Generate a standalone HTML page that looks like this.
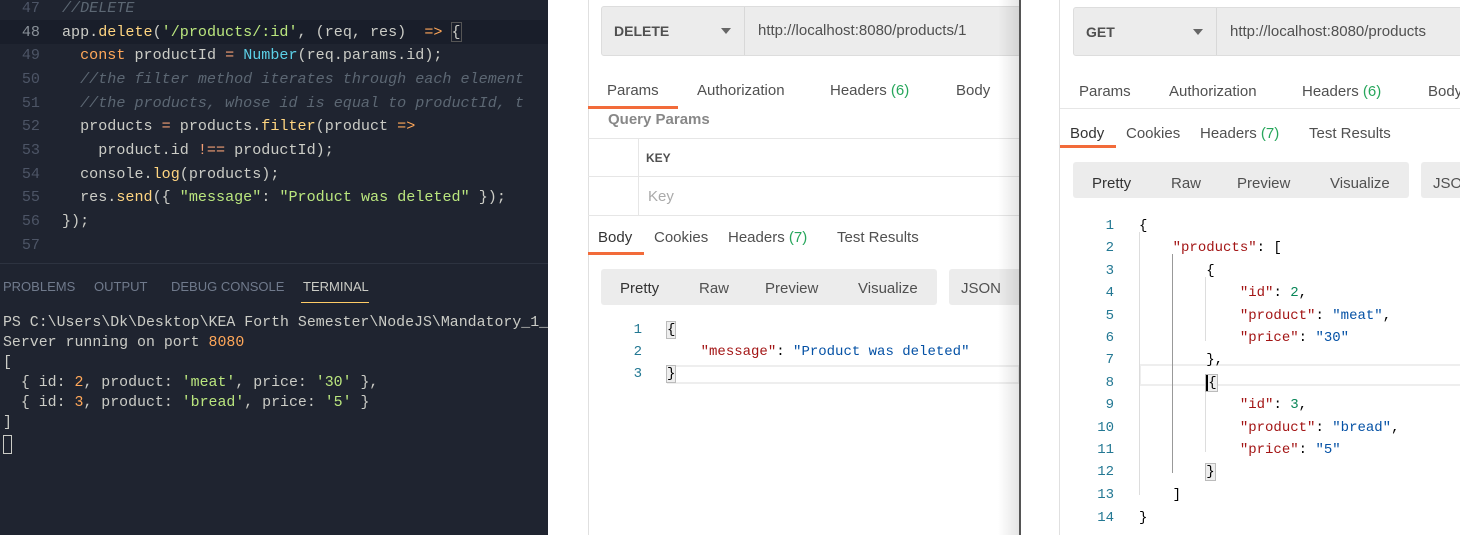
<!DOCTYPE html>
<html><head><meta charset="utf-8"><style>
*{margin:0;padding:0;box-sizing:border-box}
body{width:1460px;height:535px;position:relative;overflow:hidden;background:#fff;font-family:"Liberation Sans",sans-serif}
.a{position:absolute;white-space:pre}
#ed{position:absolute;left:0;top:0;width:548px;height:535px;background:#1f2430;overflow:hidden}
.ln{position:absolute;left:0;width:40px;text-align:right;color:#4d5566;font:15.1px/24px "Liberation Mono",monospace}
.cd{position:absolute;left:62px;color:#cbccc6;font:15.1px/24px "Liberation Mono",monospace;white-space:pre}
.k{color:#ffa759}.f{color:#ffd580}.s{color:#bae67e}.c{color:#5c6773;font-style:italic}.n{color:#5ccfe6}.o{color:#f29e74}
.tm{position:absolute;left:3px;color:#cbccc6;font:14.9px/20px "Liberation Mono",monospace;white-space:pre}
.tab{position:absolute;top:279px;font-size:13px;color:#707a8c}
.pm{color:#505050;font-size:15px;margin-top:2px}
.g{color:#26a65b}
.box{position:absolute;background:#ececec;border:1px solid #ddd;border-radius:3px}
.jc{position:absolute;font:14px/22px "Liberation Mono",monospace;white-space:pre;color:#000}
.jn{position:absolute;font:14px/22px "Liberation Mono",monospace;color:#237893;text-align:right;width:40px}
.r{color:#a31515}.b{color:#0451a5}.t{color:#098658}
</style></head><body>
<div id="ed">
<div style="position:absolute;left:0;top:20px;width:548px;height:24px;background:#191e2a"></div>
<div class="ln" style="top:-4px">47</div><div class="cd c" style="top:-4px">//DELETE</div>
<div class="ln" style="top:20px;color:#8a9199">48</div><div class="cd" style="top:20px">app.<span class="f">delete</span>(<span class="s">'/products/:id'</span>, (req, res)  <span class="k">=&gt;</span> <span style="outline:1px solid #555">{</span></div>
<div class="ln" style="top:43px">49</div><div class="cd" style="top:43px">  <span class="k">const</span> productId <span class="o">=</span> <span class="n">Number</span>(req.params.id);</div>
<div class="ln" style="top:67px">50</div><div class="cd c" style="top:67px">  //the filter method iterates through each element</div>
<div class="ln" style="top:91px">51</div><div class="cd c" style="top:91px">  //the products, whose id is equal to productId, t</div>
<div class="ln" style="top:114px">52</div><div class="cd" style="top:114px">  products <span class="o">=</span> products.<span class="f">filter</span>(product <span class="k">=&gt;</span></div>
<div class="ln" style="top:138px">53</div><div class="cd" style="top:138px">    product.id <span class="o">!==</span> productId);</div>
<div class="ln" style="top:162px">54</div><div class="cd" style="top:162px">  console.<span class="f">log</span>(products);</div>
<div class="ln" style="top:185px">55</div><div class="cd" style="top:185px">  res.<span class="f">send</span>({ <span class="s">"message"</span>: <span class="s">"Product was deleted"</span> });</div>
<div class="ln" style="top:209px">56</div><div class="cd" style="top:209px">});</div>
<div class="ln" style="top:233px">57</div>
<div style="position:absolute;left:0;top:263px;width:548px;height:1px;background:#2d3340"></div>
<div class="tab" style="left:3px">PROBLEMS</div>
<div class="tab" style="left:94px">OUTPUT</div>
<div class="tab" style="left:171px">DEBUG CONSOLE</div>
<div class="tab" style="left:303px;color:#cbccc6">TERMINAL</div>
<div style="position:absolute;left:301px;top:302px;width:68px;height:1px;background:#ffcc66"></div>
<div class="tm" style="top:313px">PS C:\Users\Dk\Desktop\KEA Forth Semester\NodeJS\Mandatory_1_</div>
<div class="tm" style="top:333px">Server running on port <span class="k">8080</span></div>
<div class="tm" style="top:353px">[</div>
<div class="tm" style="top:373px">  { id: <span class="k">2</span>, product: <span class="s">'meat'</span>, price: <span class="s">'30'</span> },</div>
<div class="tm" style="top:393px">  { id: <span class="k">3</span>, product: <span class="s">'bread'</span>, price: <span class="s">'5'</span> }</div>
<div class="tm" style="top:413px">]</div>
<div style="position:absolute;left:3px;top:435px;width:9px;height:19px;border:1px solid #cbccc6"></div>
</div>

<!-- middle panel -->
<div style="position:absolute;left:588px;top:0;width:1px;height:535px;background:#e0e0e0"></div>
<div class="box" style="left:601px;top:6px;width:420px;height:50px"></div>
<div style="position:absolute;left:744px;top:7px;width:1px;height:48px;background:#d8d8d8"></div>
<div class="a" style="left:614px;top:23px;font-size:14px;font-weight:bold;color:#505050">DELETE</div>
<div class="a" style="left:721px;top:28px;border:5px solid transparent;border-top:6px solid #666;border-bottom:0"></div>
<div class="a" style="left:758px;top:22px;font-size:15px;color:#505050">http://localhost:8080/products/1</div>
<div class="a pm" style="left:607px;top:80px">Params</div>
<div class="a pm" style="left:697px;top:80px">Authorization</div>
<div class="a pm" style="left:830px;top:80px">Headers <span class="g">(6)</span></div>
<div class="a pm" style="left:956px;top:80px">Body</div>
<div style="position:absolute;left:588px;top:106px;width:90px;height:3px;background:#f26b3a"></div>
<div class="a" style="left:608px;top:111px;font-size:15px;font-weight:bold;color:#888">Query Params</div>
<div style="position:absolute;left:588px;top:138px;width:432px;height:1px;background:#e6e6e6"></div>
<div style="position:absolute;left:588px;top:176px;width:432px;height:1px;background:#e6e6e6"></div>
<div style="position:absolute;left:588px;top:215px;width:432px;height:1px;background:#e6e6e6"></div>
<div style="position:absolute;left:638px;top:138px;width:1px;height:77px;background:#e6e6e6"></div>
<div class="a" style="left:646px;top:151px;font-size:12px;font-weight:bold;color:#505050">KEY</div>
<div class="a" style="left:648px;top:188px;font-size:15px;color:#aaa">Key</div>
<div class="a pm" style="left:598px;top:227px;color:#333">Body</div>
<div class="a pm" style="left:654px;top:227px">Cookies</div>
<div class="a pm" style="left:728px;top:227px">Headers <span class="g">(7)</span></div>
<div class="a pm" style="left:837px;top:227px">Test Results</div>
<div style="position:absolute;left:588px;top:252px;width:56px;height:3px;background:#f26b3a"></div>
<div class="box" style="left:601px;top:269px;width:336px;height:36px;border:0"></div>
<div class="box" style="left:949px;top:269px;width:80px;height:36px;border:0"></div>
<div class="a pm" style="left:620px;top:278px;color:#333">Pretty</div>
<div class="a pm" style="left:699px;top:278px">Raw</div>
<div class="a pm" style="left:765px;top:278px">Preview</div>
<div class="a pm" style="left:858px;top:278px">Visualize</div>
<div class="a pm" style="left:961px;top:278px">JSON</div>
<div style="position:absolute;left:667px;top:365px;width:353px;height:19px;border:2px solid #eee;border-left:0"></div>
<div class="jn" style="left:602px;top:319px">1</div><div class="jc" style="left:667px;top:319px"><span style="outline:1px solid #bbb;background:#eee">{</span></div>
<div class="jn" style="left:602px;top:341px">2</div><div class="jc" style="left:667px;top:341px">    <span class="r">"message"</span>: <span class="b">"Product was deleted"</span></div>
<div class="jn" style="left:602px;top:363px">3</div><div class="jc" style="left:667px;top:363px"><span style="outline:1px solid #bbb;background:#eee">}</span></div>
<div style="position:absolute;left:998px;top:0;width:21px;height:535px;background:linear-gradient(90deg,rgba(0,0,0,0),rgba(0,0,0,.1))"></div>
<div style="position:absolute;left:1019px;top:0;width:2px;height:535px;background:#555"></div>

<!-- right panel -->
<div style="position:absolute;left:1021px;top:0;width:439px;height:535px;background:#fff"></div>
<div style="position:absolute;left:1059px;top:0;width:1px;height:535px;background:#e0e0e0"></div>
<div class="box" style="left:1073px;top:7px;width:400px;height:49px"></div>
<div style="position:absolute;left:1216px;top:8px;width:1px;height:47px;background:#d8d8d8"></div>
<div class="a" style="left:1086px;top:24px;font-size:14px;font-weight:bold;color:#505050">GET</div>
<div class="a" style="left:1193px;top:29px;border:5px solid transparent;border-top:6px solid #666;border-bottom:0"></div>
<div class="a" style="left:1230px;top:23px;font-size:15px;color:#505050">http://localhost:8080/products</div>
<div class="a pm" style="left:1079px;top:81px">Params</div>
<div class="a pm" style="left:1169px;top:81px">Authorization</div>
<div class="a pm" style="left:1302px;top:81px">Headers <span class="g">(6)</span></div>
<div class="a pm" style="left:1428px;top:81px">Body</div>
<div style="position:absolute;left:1060px;top:108px;width:400px;height:1px;background:#e6e6e6"></div>
<div class="a pm" style="left:1070px;top:123px;color:#333">Body</div>
<div class="a pm" style="left:1126px;top:123px">Cookies</div>
<div class="a pm" style="left:1200px;top:123px">Headers <span class="g">(7)</span></div>
<div class="a pm" style="left:1309px;top:123px">Test Results</div>
<div style="position:absolute;left:1060px;top:145px;width:56px;height:3px;background:#f26b3a"></div>
<div class="box" style="left:1073px;top:162px;width:336px;height:36px;border:0"></div>
<div class="box" style="left:1421px;top:162px;width:60px;height:36px;border:0"></div>
<div class="a pm" style="left:1092px;top:173px;color:#333">Pretty</div>
<div class="a pm" style="left:1171px;top:173px">Raw</div>
<div class="a pm" style="left:1237px;top:173px">Preview</div>
<div class="a pm" style="left:1330px;top:173px">Visualize</div>
<div class="a pm" style="left:1433px;top:173px">JSON</div>
<div style="position:absolute;left:1139px;top:364px;width:321px;height:22px;border:2px solid #eee;border-right:0"></div>
<div style="position:absolute;left:1139px;top:232px;width:1px;height:263px;background:#ddd"></div>
<div style="position:absolute;left:1172px;top:254px;width:1px;height:219px;background:#999"></div>
<div style="position:absolute;left:1205px;top:277px;width:1px;height:64px;background:#ddd"></div>
<div style="position:absolute;left:1205px;top:388px;width:1px;height:64px;background:#ddd"></div>
<div class="jn" style="left:1074px;top:215px">1</div><div class="jc" style="left:1139px;top:215px">{</div>
<div class="jn" style="left:1074px;top:237px">2</div><div class="jc" style="left:1139px;top:237px">    <span class="r">"products"</span>: [</div>
<div class="jn" style="left:1074px;top:260px">3</div><div class="jc" style="left:1139px;top:260px">        {</div>
<div class="jn" style="left:1074px;top:282px">4</div><div class="jc" style="left:1139px;top:282px">            <span class="r">"id"</span>: <span class="t">2</span>,</div>
<div class="jn" style="left:1074px;top:305px">5</div><div class="jc" style="left:1139px;top:305px">            <span class="r">"product"</span>: <span class="b">"meat"</span>,</div>
<div class="jn" style="left:1074px;top:327px">6</div><div class="jc" style="left:1139px;top:327px">            <span class="r">"price"</span>: <span class="b">"30"</span></div>
<div class="jn" style="left:1074px;top:349px">7</div><div class="jc" style="left:1139px;top:349px">        },</div>
<div class="jn" style="left:1074px;top:372px">8</div><div class="jc" style="left:1139px;top:372px">        <span style="outline:1px solid #bbb;background:#eee;border-left:2px solid #000">{</span></div>
<div class="jn" style="left:1074px;top:394px">9</div><div class="jc" style="left:1139px;top:394px">            <span class="r">"id"</span>: <span class="t">3</span>,</div>
<div class="jn" style="left:1074px;top:417px">10</div><div class="jc" style="left:1139px;top:417px">            <span class="r">"product"</span>: <span class="b">"bread"</span>,</div>
<div class="jn" style="left:1074px;top:439px">11</div><div class="jc" style="left:1139px;top:439px">            <span class="r">"price"</span>: <span class="b">"5"</span></div>
<div class="jn" style="left:1074px;top:461px">12</div><div class="jc" style="left:1139px;top:461px">        <span style="outline:1px solid #bbb;background:#eee">}</span></div>
<div class="jn" style="left:1074px;top:484px">13</div><div class="jc" style="left:1139px;top:484px">    ]</div>
<div class="jn" style="left:1074px;top:507px">14</div><div class="jc" style="left:1139px;top:507px">}</div>
</body></html>
